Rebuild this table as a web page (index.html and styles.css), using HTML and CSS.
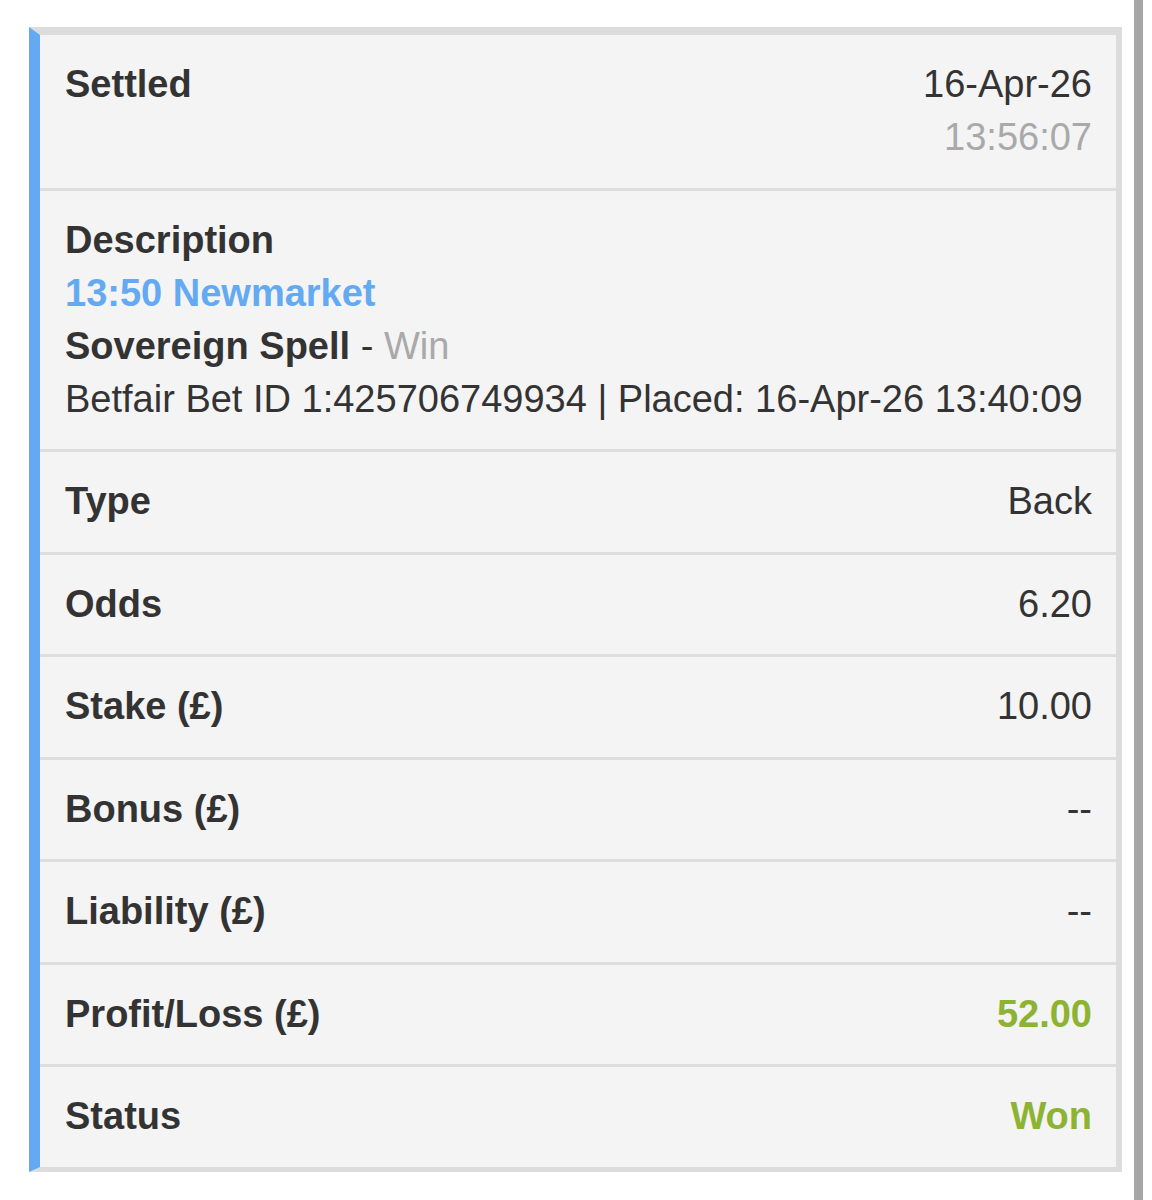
FILE: index.html
```html
<!DOCTYPE html>
<html lang="en">
<head>
    <meta charset="UTF-8">
    <meta name="viewport" content="width=device-width, initial-scale=1.0">
    <title>Bet Details</title>
    <link rel="stylesheet" href="styles.css">
</head>
<body>

    <div class="page">
        <div class="bet-card">

            <div class="bet-row">
                <div class="label">Settled</div>
                <div class="value">
                    16-Apr-26<br>
                    <span class="muted">13:56:07</span>
                </div>
            </div>

            <div class="bet-row description">
                <div class="label">Description</div>
                <div class="event">13:50 Newmarket</div>
                <div><span class="label">Sovereign Spell</span> - <span class="muted">Win</span></div>
                <div>Betfair Bet ID 1:425706749934 | Placed: 16-Apr-26 13:40:09</div>
            </div>

            <div class="bet-row">
                <div class="label">Type</div>
                <div class="value">Back</div>
            </div>

            <div class="bet-row">
                <div class="label">Odds</div>
                <div class="value">6.20</div>
            </div>

            <div class="bet-row">
                <div class="label">Stake (£)</div>
                <div class="value">10.00</div>
            </div>

            <div class="bet-row">
                <div class="label">Bonus (£)</div>
                <div class="value">--</div>
            </div>

            <div class="bet-row">
                <div class="label">Liability (£)</div>
                <div class="value">--</div>
            </div>

            <div class="bet-row">
                <div class="label">Profit/Loss (£)</div>
                <div class="value won">52.00</div>
            </div>

            <div class="bet-row">
                <div class="label">Status</div>
                <div class="value won">Won</div>
            </div>

        </div>
    </div>

</body>
</html>
```

FILE: styles.css
```css
body {
    font-family: "Liberation Sans", Arial, sans-serif;
    background-color: #fff;
    color: #333;
    margin: 0;
}
.page {
    width: 1134px;
    min-height: 100vh;
    border-right: 9px solid #a6a6a6;
    padding-top: 27px;
    box-sizing: content-box;
}
.bet-card {
    margin-left: 29px;
    margin-right: 12px;
    background-color: #f4f4f4;
    border: 6px solid #dcdcdc;
    border-top-width: 8px;
    border-bottom-width: 5px;
    border-left: 11px solid #64aaf2;
}
.bet-row {
    display: flex;
    justify-content: space-between;
    align-items: flex-start;
    padding: 23.25px 24px 23.25px 25px;
    font-size: 38px;
    line-height: 53px;
    border-bottom: 3px solid #dedede;
}
.bet-row:last-child {
    border-bottom: none;
}
.bet-row.description {
    display: block;
}
.label {
    font-weight: bold;
}
.value {
    text-align: right;
}
.muted {
    color: #a9a9a9;
}
.event {
    color: #64aaf2;
    font-weight: bold;
}
.won {
    color: #8cb332;
    font-weight: bold;
}
```
